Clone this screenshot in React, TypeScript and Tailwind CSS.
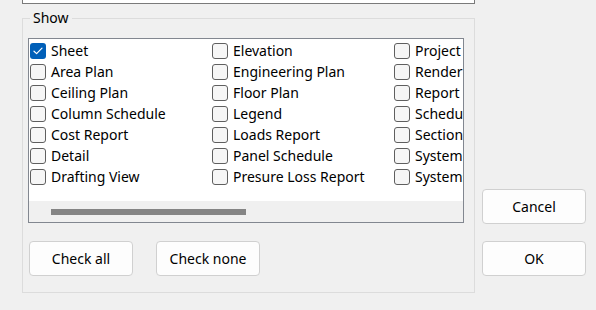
import React from 'react';

const COLUMNS = [
  ['Sheet', 'Area Plan', 'Ceiling Plan', 'Column Schedule', 'Cost Report', 'Detail', 'Drafting View'],
  ['Elevation', 'Engineering Plan', 'Floor Plan', 'Legend', 'Loads Report', 'Panel Schedule', 'Presure Loss Report'],
  ['Project Browser', 'Rendering', 'Report', 'Schedule/Quantities', 'Section', 'System Browser', 'Systems Analysis'],
];

function CheckBox({ checked }: { checked?: boolean }) {
  if (checked) {
    return (
      <span className="w-[16px] h-[16px] shrink-0 rounded-[3px] bg-[#005fb8] flex items-center justify-center">
        <svg width="10" height="8" viewBox="0 0 10 8" fill="none">
          <path d="M1 4.2 L3.6 6.6 L9 1.2" stroke="white" strokeWidth="1.2" strokeLinecap="round" strokeLinejoin="round" />
        </svg>
      </span>
    );
  }
  return <span className="w-[16px] h-[16px] shrink-0 rounded-[3px] border border-[#5f5f5f] bg-[#f6f6f6]" />;
}

function Button({ children }: { children: React.ReactNode }) {
  return (
    <button className="w-[104px] h-[35px] rounded-[4px] border border-[#d0d0d0] bg-[#fdfdfd] text-[14px] text-black">
      {children}
    </button>
  );
}

export default function App() {
  return (
    <div className="w-[596px] h-[310px] bg-[#f0f0f0] overflow-hidden font-['Noto_Sans',sans-serif] text-black">
      {/* bottom of the control above */}
      <div className="ml-[22px] w-[453px] h-[4px] bg-white border-x border-b border-[#7a7a7a]" />

      <div className="flex items-start mt-[14px] ml-[22px]">
        {/* Show group */}
        <div className="relative w-[453px] h-[275px] border border-[#dcdcdc] pt-[19px] pl-[5px]">
          <span className="absolute left-[7px] -top-[11px] px-[3px] bg-[#f0f0f0] text-[14px] leading-[20px]">Show</span>

          <div className="w-[436px] h-[185px] border border-[#828790] bg-white flex flex-col overflow-hidden">
            <div className="flex flex-1 pt-[1px] pl-[1px] overflow-hidden">
              {COLUMNS.map((col, ci) => (
                <div key={ci} className="w-[182px] shrink-0 flex flex-col">
                  {col.map((label, ri) => (
                    <div key={label} className="h-[21px] flex items-center gap-[5px] whitespace-nowrap">
                      <CheckBox checked={ci === 0 && ri === 0} />
                      <span className="text-[14px] leading-[21px]">{label}</span>
                    </div>
                  ))}
                </div>
              ))}
            </div>
            <div className="h-[21px] bg-[#f0f0f0] flex items-center pl-[22px]">
              <div className="w-[195px] h-[6px] bg-[#858585]" />
            </div>
          </div>

          <div className="flex gap-[23px] mt-[18px] pl-[1px]">
            <Button>Check all</Button>
            <Button>Check none</Button>
          </div>
        </div>

        {/* dialog buttons */}
        <div className="flex flex-col gap-[17px] mt-[171px] ml-[7px]">
          <Button>Cancel</Button>
          <Button>OK</Button>
        </div>
      </div>
    </div>
  );
}
